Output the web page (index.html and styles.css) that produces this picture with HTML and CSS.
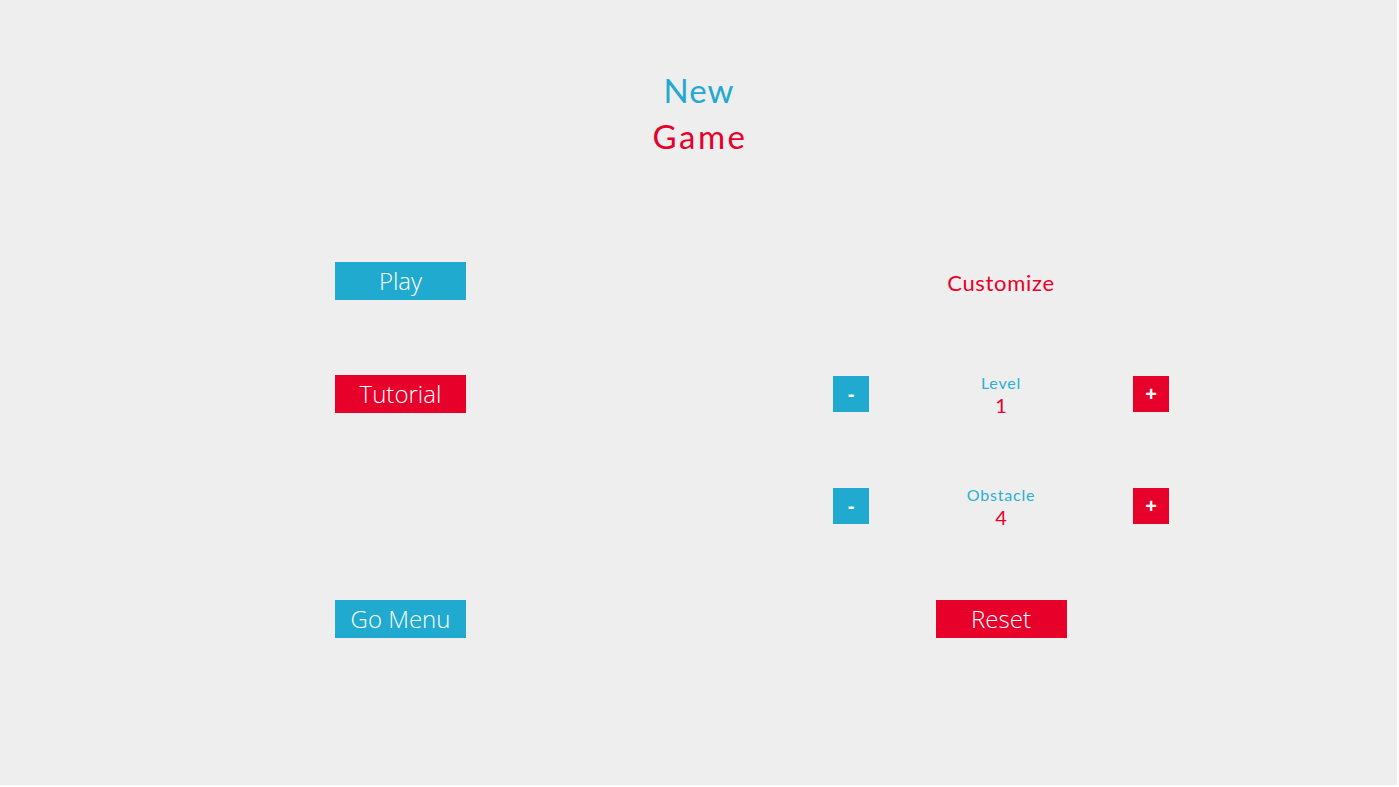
FILE: index.html
```html
<!DOCTYPE html>
<html>
<head>
<meta charset="utf-8">
<title>New Game</title>
<link rel="stylesheet" href="styles.css">
</head>
<body>
<div class="app">
  <header class="title">
    <div class="title-new">New</div>
    <div class="title-game">Game</div>
  </header>
  <main class="grid">
    <div class="cell"><button class="btn btn-blue">Play</button></div>
    <div class="cell"><div class="customize">Customize</div></div>

    <div class="cell"><button class="btn btn-red">Tutorial</button></div>
    <div class="cell">
      <div class="stepper">
        <button class="step step-minus">-</button>
        <div class="step-info">
          <div class="step-label">Level</div>
          <div class="step-value">1</div>
        </div>
        <button class="step step-plus">+</button>
      </div>
    </div>

    <div class="cell"></div>
    <div class="cell">
      <div class="stepper">
        <button class="step step-minus">-</button>
        <div class="step-info">
          <div class="step-label">Obstacle</div>
          <div class="step-value">4</div>
        </div>
        <button class="step step-plus">+</button>
      </div>
    </div>

    <div class="cell"><button class="btn btn-blue">Go Menu</button></div>
    <div class="cell"><button class="btn btn-red">Reset</button></div>
  </main>
</div>
</body>
</html>
```
FILE: styles.css
```css
html, body {
  margin: 0;
  padding: 0;
  background: #ffffff;
}
.app {
  width: 1397px;
  height: 785px;
  background: #eeeeee;
  overflow: hidden;
}
.title {
  padding-top: 67px;
  text-align: center;
  font-family: Lato, "DejaVu Sans", sans-serif;
  font-size: 33px;
  line-height: 46px;
}
.title-new {
  color: #22a9cf;
  letter-spacing: 1px;
  padding-left: 1px;
}
.title-game {
  color: #e6002a;
  letter-spacing: 2.5px;
  padding-left: 3px;
}

.grid {
  margin-top: 66px;
  padding-left: 100px;
  display: grid;
  grid-template-columns: 601px 600px;
  grid-template-rows: repeat(4, 112.5px);
}
.cell {
  display: flex;
  align-items: center;
  justify-content: center;
}
.btn {
  width: 131px;
  height: 38px;
  border: none;
  margin: 0;
  padding: 0;
  color: #ffffff;
  font-family: "Open Sans", "Liberation Sans", sans-serif;
  font-weight: 300;
  font-size: 24px;
  line-height: 36px;
}
.btn-blue { background: #21aacf; }
.btn-red { background: #e6002a; }

.customize {
  color: #e6002a;
  font-family: Lato, "DejaVu Sans", sans-serif;
  font-size: 22px;
  letter-spacing: 0.7px;
  margin-top: 3px;
}

.stepper {
  width: 336px;
  display: flex;
  align-items: center;
  justify-content: space-between;
}
.step {
  width: 36px;
  height: 36px;
  border: none;
  margin: 0;
  padding: 0;
  color: #ffffff;
  font-family: "Liberation Sans", Arial, sans-serif;
  font-weight: bold;
  font-size: 20px;
  line-height: 36px;
}
.step-minus { background: #21aacf; }
.step-plus { background: #e6002a; }
.step-info {
  text-align: center;
  font-family: Lato, "DejaVu Sans", sans-serif;
  margin-top: 2px;
}
.step-label {
  color: #2aaed2;
  font-size: 16px;
  line-height: 20px;
  letter-spacing: 0.8px;
}
.step-value {
  color: #e6002a;
  font-size: 20px;
  line-height: 24px;
}
```
